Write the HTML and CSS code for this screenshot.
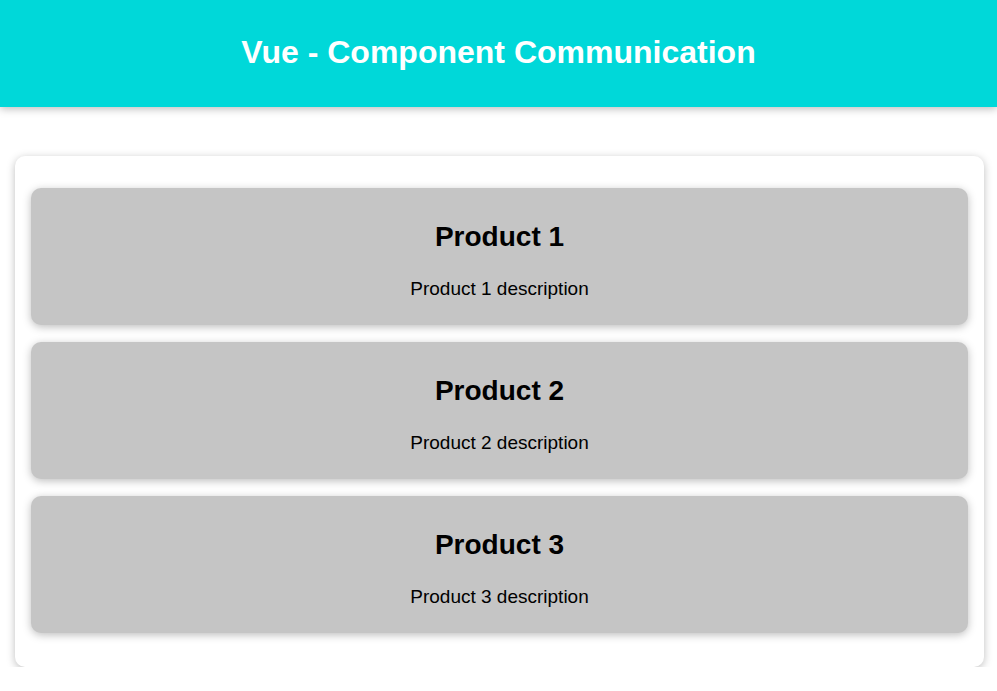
FILE: index.html
```html
<!DOCTYPE html>
<html lang="en">
<head>
<meta charset="utf-8">
<title>Vue - Component Communication</title>
<link rel="stylesheet" href="styles.css">
</head>
<body>
<header class="app-header">
  <h1 class="app-title">Vue - Component Communication</h1>
</header>
<section class="panel">
  <ul class="product-list">
    <li class="product">
      <h2 class="product-title">Product 1</h2>
      <p class="product-desc">Product 1 description</p>
    </li>
    <li class="product">
      <h2 class="product-title">Product 2</h2>
      <p class="product-desc">Product 2 description</p>
    </li>
    <li class="product">
      <h2 class="product-title">Product 3</h2>
      <p class="product-desc">Product 3 description</p>
    </li>
  </ul>
</section>
</body>
</html>
```

FILE: styles.css
```css
* { box-sizing: border-box; }

html, body {
  margin: 0;
  padding: 0;
  background: #ffffff;
  font-family: "Liberation Sans", Arial, Helvetica, sans-serif;
  color: #000;
}

.app-header {
  background: #00d8d9;
  height: 107px;
  display: flex;
  align-items: center;
  justify-content: center;
  box-shadow: 0 2px 8px rgba(0, 0, 0, 0.26);
}

.app-title {
  margin: 0;
  color: #ffffff;
  font-size: 32px;
  line-height: 38px;
  font-weight: bold;
  padding-bottom: 4px;
}

.panel {
  margin: 49px 13px 0 15px;
  background: #fff;
  border-radius: 10px;
  box-shadow: 0 2px 8px rgba(0, 0, 0, 0.26);
  padding: 16px;
}

.product-list {
  list-style: none;
  margin: 0;
  padding: 16px 0 18px;
  display: flex;
  flex-direction: column;
  gap: 17px;
}

.product {
  background: #c5c5c5;
  border-radius: 10px;
  box-shadow: 0 2px 8px rgba(0, 0, 0, 0.26);
  height: 137px;
  text-align: center;
  padding-top: 33px;
}

.product-title {
  margin: 0;
  font-size: 28px;
  line-height: 32px;
  font-weight: bold;
}

.product-desc {
  margin: 25px 0 0;
  font-size: 19px;
  line-height: 22px;
}
```
